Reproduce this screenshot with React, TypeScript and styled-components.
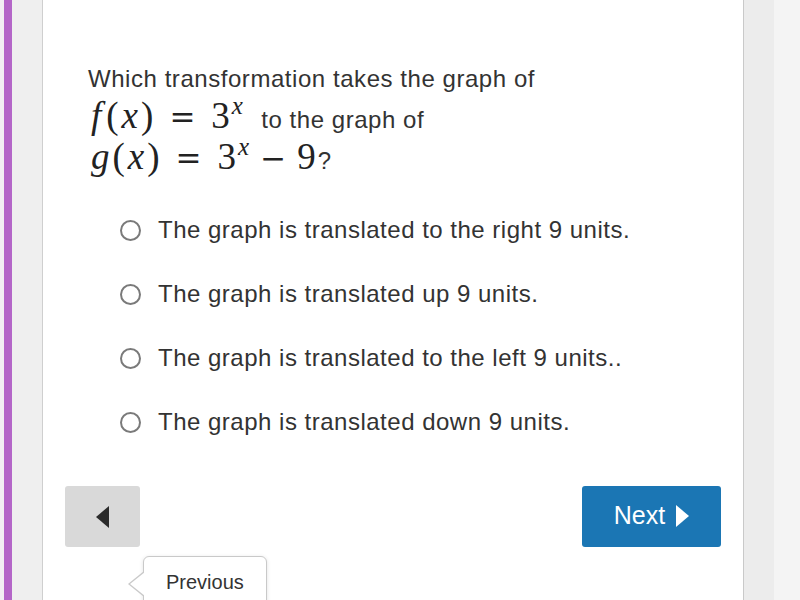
import styled, { createGlobalStyle } from "styled-components";

const GlobalStyle = createGlobalStyle`
  html, body {
    margin: 0;
    padding: 0;
    background: #ffffff;
  }
  body {
    font-family: "Liberation Sans", Arial, sans-serif;
    color: #333333;
  }
`;

const Page = styled.div`
  display: flex;
  width: 800px;
  height: 600px;
  overflow: hidden;
`;

const LeftRail = styled.div`
  display: flex;
  flex-shrink: 0;
`;

const RailStrip = styled.div<{ $width: number; $color: string }>`
  width: ${(props) => props.$width}px;
  background: ${(props) => props.$color};
`;

const RightRail = styled.div`
  display: flex;
  flex-shrink: 0;
`;

const Content = styled.div`
  position: relative;
  flex: 1;
  background: #ffffff;
  padding-top: 58px;
`;

const Question = styled.div`
  padding-left: 45px;
  font-size: 24px;
  letter-spacing: 0.55px;
  line-height: 41px;
  color: #333333;
`;

const Line = styled.div`
  height: 41px;
  white-space: nowrap;
`;

const Math = styled.span<{ $trail: number }>`
  font-family: "Liberation Serif", "Times New Roman", serif;
  font-size: 37px;
  letter-spacing: 0;
  line-height: 0;
  color: #222222;
  margin-right: ${(props) => props.$trail}px;
`;

const Var = styled.i<{ $after?: number }>`
  font-style: italic;
  padding-left: 3px;
  padding-right: ${(props) => props.$after ?? 3}px;
`;

const Op = styled.span<{ $side: number }>`
  font-family: "DejaVu Serif", serif;
  font-size: 31px;
  margin: 0 ${(props) => props.$side}px;
`;

const Sup = styled.sup`
  font-size: 25px;
  font-style: italic;
  line-height: 0;
  vertical-align: 0;
  position: relative;
  top: -14px;
  margin-left: 2px;
`;

const Options = styled.div`
  margin-top: 17px;
  padding-left: 77px;
`;

const Option = styled.label`
  display: flex;
  align-items: center;
  height: 64px;
  gap: 17px;
  font-size: 24px;
  letter-spacing: 0.5px;
  color: #333333;
`;

const Radio = styled.span`
  width: 17px;
  height: 17px;
  border: 2px solid #7a7a7a;
  border-radius: 50%;
  flex-shrink: 0;
`;

const ButtonRow = styled.div`
  display: flex;
  justify-content: space-between;
  margin-top: 32px;
  padding: 0 22px;
`;

const PrevButton = styled.button`
  width: 75px;
  height: 61px;
  border: none;
  border-radius: 3px;
  background: #d9d9d9;
  display: flex;
  align-items: center;
  justify-content: center;
  padding: 0;
`;

const NextButton = styled.button`
  width: 139px;
  height: 61px;
  border: none;
  border-radius: 3px;
  background: #1b76b4;
  color: #ffffff;
  font-family: "Liberation Sans", Arial, sans-serif;
  font-size: 25px;
  display: flex;
  align-items: center;
  justify-content: center;
  gap: 11px;
  padding: 0 0 2px 0;
`;

const Tooltip = styled.div`
  position: absolute;
  left: 100px;
  top: 556px;
  width: 124px;
  height: 60px;
  background: #ffffff;
  border: 1px solid #c9c9c9;
  border-radius: 6px;
  box-shadow: 0 1px 4px rgba(0, 0, 0, 0.12);
  font-size: 20px;
  color: #333333;
  padding: 14px 0 0 22px;
  box-sizing: border-box;

  &::before {
    content: "";
    position: absolute;
    left: -16px;
    top: 14px;
    border-top: 13px solid transparent;
    border-bottom: 13px solid transparent;
    border-right: 16px solid #c9c9c9;
  }
  &::after {
    content: "";
    position: absolute;
    left: -14px;
    top: 15px;
    border-top: 12px solid transparent;
    border-bottom: 12px solid transparent;
    border-right: 15px solid #ffffff;
  }
`;

const options = [
  "The graph is translated to the right 9 units.",
  "The graph is translated up 9 units.",
  "The graph is translated to the left 9 units..",
  "The graph is translated down 9 units.",
];

export default function App() {
  return (
    <>
      <GlobalStyle />
      <Page>
        <LeftRail>
          <RailStrip $width={4} $color="#f2eff3" />
          <RailStrip $width={8} $color="#b466c8" />
          <RailStrip $width={30} $color="#efefef" />
          <RailStrip $width={1} $color="#cfcfcf" />
        </LeftRail>
        <Content>
          <Question>
            <Line>Which transformation takes the graph of</Line>
            <Line>
              <Math $trail={11}>
                <Var $after={5}>f</Var>(<Var>x</Var>)<Op $side={16}>=</Op>3
                <Sup>x</Sup>
              </Math>{" "}
              to the graph of
            </Line>
            <Line>
              <Math $trail={2}>
                <Var>g</Var>(<Var>x</Var>)<Op $side={16}>=</Op>3<Sup>x</Sup>
                <Op $side={11}>−</Op>9
              </Math>
              ?
            </Line>
          </Question>
          <Options>
            {options.map((text) => (
              <Option key={text}>
                <Radio />
                {text}
              </Option>
            ))}
          </Options>
          <ButtonRow>
            <PrevButton aria-label="Previous">
              <svg width="14" height="22" viewBox="0 0 14 22">
                <path d="M13 0 L0 11 L13 22 Z" fill="#2b2b2b" />
              </svg>
            </PrevButton>
            <NextButton>
              Next
              <svg width="13" height="22" viewBox="0 0 13 22">
                <path d="M0 0 L13 11 L0 22 Z" fill="#ffffff" />
              </svg>
            </NextButton>
          </ButtonRow>
          <Tooltip>Previous</Tooltip>
        </Content>
        <RightRail>
          <RailStrip $width={1} $color="#c9c9c9" />
          <RailStrip $width={30} $color="#ececec" />
          <RailStrip $width={26} $color="#f4f4f4" />
        </RightRail>
      </Page>
    </>
  );
}
